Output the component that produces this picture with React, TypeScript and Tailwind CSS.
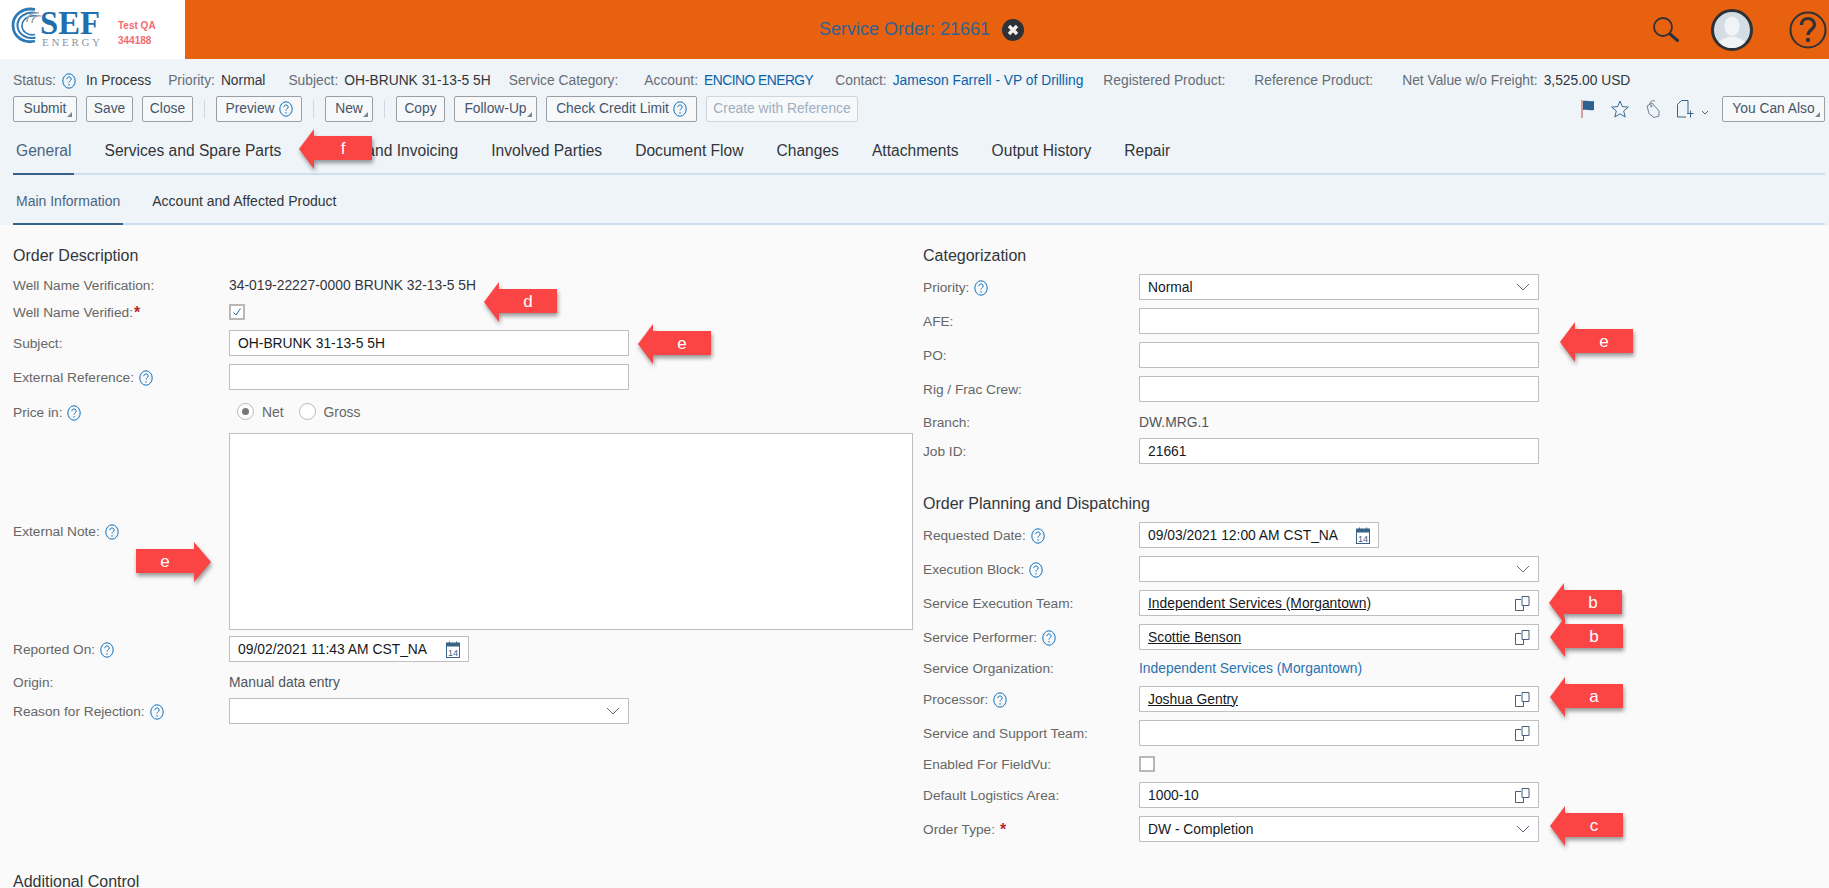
import React from 'react'

const HelpIcon = ({ className = '' }: { className?: string }) => (
  <svg viewBox="0 0 14 16" className={`h-[16px] w-[14px] shrink-0 ${className}`} fill="none" stroke="#0a6ebd">
    <ellipse cx="7" cy="8" rx="6.2" ry="7.2" strokeWidth="1" />
    <path d="M4.8 6.2c0-1.4 1-2.2 2.2-2.2s2.2.8 2.2 2c0 1.700-2.200 1.800-2.200 3.600" strokeWidth="1" />
    <path d="M7 11.200v1.200" strokeWidth="1.200" />
  </svg>
)

const Chevron = () => (
  <svg viewBox="0 0 14 8" className="h-[8px] w-[14px]" fill="none" stroke="#5b6b7b" strokeWidth="1">
    <path d="M1 1l6 6 6-6" />
  </svg>
)

const ValueHelp = () => (
  <svg viewBox="0 0 15 15" className="h-[15px] w-[15px]" fill="none" stroke="#44607c" strokeWidth="1">
    <path d="M6 3.500H.5v11h8v-4.500" />
    <path d="M7 .5h7v9H7z" />
  </svg>
)

const CalendarIcon = () => (
  <svg viewBox="0 0 14 17" className="h-[17px] w-[14px]">
    <rect x="0.500" y="2" width="13" height="14.500" fill="none" stroke="#3b6288" />
    <rect x="0.500" y="2" width="13" height="3.500" fill="#3b6288" />
    <path d="M3.500 0.500v2M10.500 0.500v2" stroke="#3b6288" />
    <text x="7" y="14.600" textAnchor="middle" fontSize="9" fill="#3b6288" fontFamily="Liberation Sans">14</text>
  </svg>
)

const Corner = () => (
  <svg viewBox="0 0 5 5" className="absolute bottom-[4px] right-[4px] h-[5px] w-[5px]">
    <path d="M5 0v5H0z" fill="#7a8794" />
  </svg>
)

function Btn({ w, caret, help, disabled, children }: { w: string; caret?: boolean; help?: boolean; disabled?: boolean; children: React.ReactNode }) {
  return (
    <div
      className={`relative flex h-[26px] shrink-0 items-center justify-center gap-[4px] rounded-[2px] border bg-[#f7f8fa] text-[13.8px] ${w} ${
        disabled ? 'border-[#cdd5dd] text-[#9db0c2]' : 'border-[#9a9fa5] text-[#44566a]'
      }`}
    >
      {children}
      {help && <HelpIcon />}
      {caret && <Corner />}
    </div>
  )
}

const Sep = () => <div className="mx-[2px] h-[18px] w-[1px] shrink-0 bg-[#cfd8e2]" />

function Meta({ label, value, help, link, valueClass = '', className = '' }: { label: string; value?: string; help?: boolean; link?: boolean; valueClass?: string; className?: string }) {
  return (
    <div className={`flex shrink-0 items-center gap-[6px] ${className}`}>
      <span className="text-[#666d75]">{label}</span>
      {help && <HelpIcon className="mr-[4px]" />}
      {value && <span className={`${link ? 'text-[#0b62a8]' : 'text-[#32363a]'} ${valueClass}`}>{value}</span>}
    </div>
  )
}

function Row({ label, help, req, h = 'h-[34px]', children }: { label: string; help?: boolean; req?: 'near' | 'far'; h?: string; children?: React.ReactNode }) {
  return (
    <div className={`flex items-center ${h}`}>
      <div className="flex w-[216px] shrink-0 items-center gap-[5px] pt-[2px] text-[13.7px] text-[#666666]">
        <span>{label}</span>
        {help && <HelpIcon />}
        {req && <span className={`text-[16px] font-bold leading-none text-[#b8282c] ${req === 'near' ? '-ml-[4px]' : ''}`}>*</span>}
      </div>
      {children}
    </div>
  )
}

function Field({ w = 'w-[400px]', link, value, right }: { w?: string; link?: boolean; value?: string; right?: React.ReactNode }) {
  return (
    <div className={`flex h-[26px] items-center justify-between border border-[#bfbfbf] bg-white pl-[8px] pr-[8px] text-[13.85px] text-[#15191e] ${w}`}>
      <span className={link ? 'underline' : ''}>{value}</span>
      {right}
    </div>
  )
}

const Title = ({ children, className = '' }: { children: React.ReactNode; className?: string }) => (
  <div className={`flex h-[22px] items-center text-[16px] text-[#32363a] ${className}`}>{children}</div>
)

const Radio = ({ on }: { on?: boolean }) => (
  <span className="flex h-[17px] w-[17px] items-center justify-center rounded-full border border-[#b8b8b8] bg-white">
    {on && <span className="h-[7px] w-[7px] rounded-full bg-[#777]" />}
  </span>
)

function ArrowLeft({ pos, letter }: { pos: string; letter: string }) {
  return (
    <div className={`absolute h-[40px] w-[73px] ${pos}`}>
      <svg viewBox="0 0 73 40" className="h-[40px] w-[73px] drop-shadow-[1px_3px_2px_rgba(0,0,0,0.4)]">
        <path d="M0 20L15 0v7h58v24H15v9z" fill="#fb4444" />
      </svg>
      <span className="absolute inset-y-0 left-[15px] right-0 flex items-center justify-center text-[17px] text-white">{letter}</span>
    </div>
  )
}

export default function App() {
  const tabs = ['Services and Spare Parts', 'Pricing and Invoicing', 'Involved Parties', 'Document Flow', 'Changes', 'Attachments', 'Output History', 'Repair']

  return (
    <div className="relative h-[888px] w-full overflow-hidden bg-[#fafafa] font-['Liberation_Sans',Arial,sans-serif]">
      {/* shell bar */}
      <header className="relative flex h-[59px] items-center bg-[#e8610e]">
        <div className="flex h-[59px] w-[185px] shrink-0 items-center bg-white">
          <svg viewBox="0 0 105 50" className="ml-[11px] h-[50px] w-[105px]">
            <g fill="none" stroke="#2f79b5">
              <path d="M24 4.500C12 2 1.500 10 2 21c.5 11 11 18 22 15" strokeWidth="2.800" />
              <path d="M25 8C15 6 6 12 6.500 21c.5 8 9 14 18 11.500" strokeWidth="2" />
              <path d="M26 11c-8-1.500-15 3-15 10 0 6 7 10 13 8.500" strokeWidth="1.600" />
              <path d="M28 8c-7-1-12 3-12 9" strokeWidth="1.500" stroke="#9aa3ab" />
              <path d="M30 11c-5-1-9 2-9 7" strokeWidth="1.500" stroke="#9aa3ab" />
            </g>
            <text x="29" y="29" fontFamily="Liberation Serif" fontWeight="700" fontSize="34" fill="#1f6fae" textLength="60" lengthAdjust="spacingAndGlyphs">SEF</text>
            <text x="31" y="41" fontFamily="Liberation Serif" fontSize="11" fill="#8f9499" textLength="58">ENERGY</text>
          </svg>
          <div className="ml-[2px] flex flex-col gap-[5px] pt-[7px] text-[10px] font-bold leading-[10px] text-[#f46a70]">
            <span>Test QA</span>
            <span>344188</span>
          </div>
        </div>
        <div className="flex flex-1 items-center pl-[634px]">
          <span className="text-[18px] text-[#2f6296]">Service Order: 21661</span>
          <svg viewBox="0 0 22 22" className="ml-[12px] h-[22px] w-[22px]">
            <circle cx="11" cy="11" r="11" fill="#2e3236" />
            <path d="M7 7l8 8M15 7l-8 8" stroke="#f2efe9" strokeWidth="3.400" />
          </svg>
        </div>
        <div className="flex items-center pr-[2px]">
          <svg viewBox="0 0 28 28" fill="none" stroke="#2e3236" className="h-[28px] w-[28px]">
            <circle cx="11" cy="11" r="9" strokeWidth="1.800" />
            <path d="M18 18l7.500 6.500" strokeWidth="3" strokeLinecap="round" />
          </svg>
          <div className="ml-[31px] flex h-[42px] w-[42px] items-end justify-center overflow-hidden rounded-full border-[3px] border-[#2e3236] bg-[#d4dde4]">
            <svg viewBox="0 0 36 34" className="h-[32px] w-[34px]">
              <ellipse cx="18" cy="11" rx="8" ry="10.500" fill="#f1f4f7" />
              <path d="M2 34c0-8 6-9 12-12h8c6 3 12 4 12 12z" fill="#f1f4f7" />
            </svg>
          </div>
          <svg viewBox="0 0 38 38" fill="none" className="ml-[36px] h-[38px] w-[38px]">
            <circle cx="19" cy="19" r="17.500" stroke="#2e3236" strokeWidth="2" />
            <path d="M12.500 14c0-4 3-6.500 6.500-6.500s6.500 2.500 6.500 6c0 5-6.500 5.500-6.500 10.500" stroke="#2e3236" strokeWidth="3.200" />
            <circle cx="19" cy="29" r="2.200" fill="#2e3236" />
          </svg>
        </div>
      </header>

      {/* object header */}
      <section className="h-[166px] bg-[#eff4f9] pt-[9px]">
        <div className="flex h-[26px] items-center gap-[20px] whitespace-nowrap pl-[13px] text-[13.8px]">
          <Meta label="Status:" help value="In Process" />
          <Meta label="Priority:" value="Normal" className="-ml-[3px]" />
          <Meta label="Subject:" value="OH-BRUNK 31-13-5 5H" className="ml-[3px]" />
          <Meta label="Service Category:" className="-ml-[2px] mr-[6px]" />
          <Meta label="Account:" value="ENCINO ENERGY" link valueClass="tracking-[-0.5px]" />
          <Meta label="Contact:" value="Jameson Farrell - VP of Drilling" link className="ml-[2px]" />
          <Meta label="Registered Product:" className="mr-[9px]" />
          <Meta label="Reference Product:" className="mr-[9px]" />
          <Meta label="Net Value w/o Freight:" value="3,525.00 USD" />
        </div>

        <div className="mt-[2px] flex items-center justify-between pl-[13px] pr-[4px]">
          <div className="flex items-center gap-[9px]">
            <Btn w="w-[64px]" caret>Submit</Btn>
            <Btn w="w-[47px]">Save</Btn>
            <Btn w="w-[51px]">Close</Btn>
            <Sep />
            <Btn w="w-[86px]" help>Preview</Btn>
            <Sep />
            <Btn w="w-[48px]" caret>New</Btn>
            <Sep />
            <Btn w="w-[49px]">Copy</Btn>
            <Btn w="w-[83px]" caret>Follow-Up</Btn>
            <Btn w="w-[151px]" help>Check Credit Limit</Btn>
            <Btn w="w-[152px]" disabled>Create with Reference</Btn>
          </div>
          <div className="flex items-center">
            <svg viewBox="0 0 14 18" className="h-[18px] w-[14px]">
              <path d="M1 0v18" stroke="#c98a82" strokeWidth="1.500" />
              <path d="M2 1c4-1 7 1 11 0v9c-4 1-7-1-11 0z" fill="#2f618f" />
            </svg>
            <svg viewBox="0 0 18 18" fill="none" stroke="#3b6a94" className="ml-[16px] h-[18px] w-[18px]">
              <path d="M9 1l2.300 5.600 6 .5-4.600 3.900 1.500 6L9 13.800 3.800 17l1.500-6L.7 7.100l6-.5z" />
            </svg>
            <svg viewBox="0 0 15 18" fill="none" stroke="#6c8096" className="ml-[17px] h-[18px] w-[15px]">
              <path d="M1 6l5-3 7 8 0 5-5 1.500-5-4z" />
              <path d="M4 5C3 2 6 0 9 1" />
              <circle cx="5.500" cy="6" r="0.800" />
            </svg>
            <svg viewBox="0 0 17 18" fill="none" stroke="#3b6288" className="ml-[16px] h-[18px] w-[17px]">
              <path d="M11 13V.5H4.500L.5 4.500v12.500H9" />
              <path d="M10 13.500h6.500M13.500 10.500v7" />
            </svg>
            <svg viewBox="0 0 8 5" fill="none" stroke="#44607c" className="ml-[7px] mt-[6px] h-[5px] w-[8px]">
              <path d="M1 1l3 3 3-3" />
            </svg>
            <div className="ml-[13px]">
              <Btn w="w-[103px]" caret>You Can Also</Btn>
            </div>
          </div>
        </div>

        {/* main tabs */}
        <div className="ml-[13px] mr-[4px] flex h-[53px] gap-[27px] border-b-[2px] border-[#cfddf0]">
          <div className="h-[53px] border-b-[2px] border-[#346187] px-[3px] pt-[20px] text-[15.6px] leading-[18px] text-[#4b6580]">General</div>
          {tabs.map((t) => (
            <div key={t} className="h-[51px] whitespace-nowrap px-[3px] pt-[20px] text-[15.6px] leading-[18px] text-[#32363a]">
              {t}
            </div>
          ))}
        </div>

        {/* sub tabs */}
        <div className="ml-[13px] mr-[4px] flex h-[50px] gap-[26px] border-b-[2px] border-[#cfddf0]">
          <div className="h-[50px] border-b-[2px] border-[#346187] px-[3px] pt-[18px] text-[14px] leading-[16px] text-[#4b6580]">Main Information</div>
          <div className="px-[3px] pt-[18px] text-[14px] leading-[16px] text-[#32363a]">Account and Affected Product</div>
        </div>
      </section>

      {/* form */}
      <main className="flex pt-[20px]">
        <div className="w-[923px] shrink-0 pl-[13px]">
          <Title className="mb-[5px]">Order Description</Title>
          <Row label="Well Name Verification:" h="h-[26px]">
            <span className="text-[13.85px] text-[#32363a]">34-019-22227-0000 BRUNK 32-13-5 5H</span>
          </Row>
          <Row label="Well Name Verified:" req="near" h="h-[28px]">
            <span className="flex h-[16px] w-[16px] items-center justify-center border-[2px] border-[#b8b8b8] bg-white">
              <svg viewBox="0 0 10 10" fill="none" stroke="#2f6ea5" className="h-[10px] w-[10px]">
                <path d="M1.500 5.500l2.500 2.500 4.500-6.500" />
              </svg>
            </span>
          </Row>
          <Row label="Subject:">
            <Field value="OH-BRUNK 31-13-5 5H" />
          </Row>
          <Row label="External Reference:" help>
            <Field />
          </Row>
          <Row label="Price in:" help h="h-[36px]">
            <div className="ml-[8px] flex items-center text-[13.85px] text-[#666666]">
              <Radio on />
              <span className="ml-[8px]">Net</span>
              <span className="ml-[15px]">
                <Radio />
              </span>
              <span className="ml-[8px]">Gross</span>
            </div>
          </Row>
          <Row label="External Note:" help h="h-[202px]">
            <div className="mt-[1px] h-[197px] w-[684px] border border-[#bfbfbf] bg-white" />
          </Row>
          <Row label="Reported On:" help>
            <Field w="w-[240px]" value="09/02/2021 11:43 AM CST_NA" right={<CalendarIcon />} />
          </Row>
          <Row label="Origin:" h="h-[28px] pt-[4px]">
            <span className="text-[13.85px] text-[#50565c]">Manual data entry</span>
          </Row>
          <Row label="Reason for Rejection:" help>
            <Field right={<Chevron />} />
          </Row>
          <Title className="mt-[143px]">Additional Control</Title>
        </div>

        <div className="flex-1">
          <Title className="mb-[3px]">Categorization</Title>
          <Row label="Priority:" help>
            <Field value="Normal" right={<Chevron />} />
          </Row>
          <Row label="AFE:">
            <Field />
          </Row>
          <Row label="PO:">
            <Field />
          </Row>
          <Row label="Rig / Frac Crew:">
            <Field />
          </Row>
          <Row label="Branch:" h="h-[28px] pt-[4px]">
            <span className="text-[13.85px] text-[#50565c]">DW.MRG.1</span>
          </Row>
          <Row label="Job ID:">
            <Field value="21661" />
          </Row>

          <Title className="mb-[3px] mt-[25px]">Order Planning and Dispatching</Title>
          <Row label="Requested Date:" help>
            <Field w="w-[240px]" value="09/03/2021 12:00 AM CST_NA" right={<CalendarIcon />} />
          </Row>
          <Row label="Execution Block:" help>
            <Field right={<Chevron />} />
          </Row>
          <Row label="Service Execution Team:">
            <Field link value="Independent Services (Morgantown)" right={<ValueHelp />} />
          </Row>
          <Row label="Service Performer:" help>
            <Field link value="Scottie Benson" right={<ValueHelp />} />
          </Row>
          <Row label="Service Organization:" h="h-[28px]">
            <span className="text-[13.85px] text-[#2a72b0]">Independent Services (Morgantown)</span>
          </Row>
          <Row label="Processor:" help>
            <Field link value="Joshua Gentry" right={<ValueHelp />} />
          </Row>
          <Row label="Service and Support Team:">
            <Field right={<ValueHelp />} />
          </Row>
          <Row label="Enabled For FieldVu:" h="h-[28px]">
            <span className="h-[16px] w-[16px] border-[2px] border-[#b8b8b8] bg-white" />
          </Row>
          <Row label="Default Logistics Area:">
            <Field value="1000-10" right={<ValueHelp />} />
          </Row>
          <Row label="Order Type:" req="far">
            <Field value="DW - Completion" right={<Chevron />} />
          </Row>
        </div>
      </main>

      {/* annotation arrows */}
      <ArrowLeft pos="left-[299px] top-[129px]" letter="f" />
      <ArrowLeft pos="left-[484px] top-[282px]" letter="d" />
      <ArrowLeft pos="left-[638px] top-[324px]" letter="e" />
      <ArrowLeft pos="left-[1560px] top-[322px]" letter="e" />
      <ArrowLeft pos="left-[1549px] top-[583px]" letter="b" />
      <ArrowLeft pos="left-[1550px] top-[617px]" letter="b" />
      <ArrowLeft pos="left-[1550px] top-[677px]" letter="a" />
      <ArrowLeft pos="left-[1550px] top-[806px]" letter="c" />
      <div className="absolute left-[136px] top-[542px] h-[40px] w-[75px]">
        <svg viewBox="0 0 75 40" className="h-[40px] w-[75px] drop-shadow-[1px_3px_2px_rgba(0,0,0,0.4)]">
          <path d="M75 20L58 0v7H0v24h58v9z" fill="#fb4444" />
        </svg>
        <span className="absolute inset-y-0 left-0 right-[17px] flex items-center justify-center text-[17px] text-white">e</span>
      </div>
    </div>
  )
}
